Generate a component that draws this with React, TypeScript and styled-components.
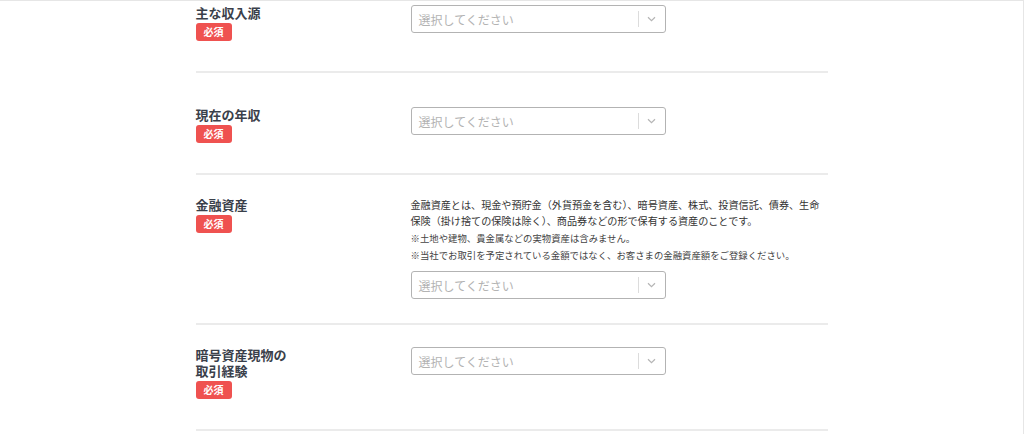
import React from "react";
import styled, { createGlobalStyle } from "styled-components";

const GlobalStyle = createGlobalStyle`
  html, body {
    margin: 0;
    padding: 0;
    background: #fff;
    height: 434px;
    overflow: hidden;
  }
  body {
    font-family: "Noto Sans CJK JP", "Noto Sans", sans-serif;
  }
`;

type Field = {
  label: string;
  note?: boolean;
  top: number;
};

const fields: Field[] = [
  { label: "主な収入源", top: 4 },
  { label: "現在の年収", top: 34 },
  { label: "金融資産", note: true, top: 22 },
  { label: "暗号資産現物の取引経験", top: 22 },
];

const App = () => {
  return (
    <>
      <GlobalStyle />
      <Frame>
        <Form>
          {fields.map((f) => (
            <Row key={f.label} $top={f.top}>
              <LabelCell>
                <Label>{f.label}</Label>
                <Required>必須</Required>
              </LabelCell>
              <InputCell>
                {f.note && (
                  <Help>
                    <Lead>
                      金融資産とは、現金や預貯金（外貨預金を含む）、暗号資産、株式、投資信託、債券、生命保険（掛け捨ての保険は除く）、商品券などの形で保有する資産のことです。
                    </Lead>
                    <Note>※土地や建物、貴金属などの実物資産は含みません。</Note>
                    <Note>
                      ※当社でお取引を予定されている金額ではなく、お客さまの金融資産額をご登録ください。
                    </Note>
                  </Help>
                )}
                <Select>
                  <Placeholder>選択してください</Placeholder>
                  <Indicator>
                    <Sep />
                    <svg width="9" height="6" viewBox="0 0 9 6">
                      <path
                        d="M1 1.2 L4.5 4.6 L8 1.2"
                        fill="none"
                        stroke="#b5b5b5"
                        strokeWidth="1.2"
                      />
                    </svg>
                  </Indicator>
                </Select>
              </InputCell>
            </Row>
          ))}
        </Form>
      </Frame>
    </>
  );
};

export default App;

const Frame = styled.div`
  height: 434px;
  box-sizing: border-box;
  border-top: 1px solid #e6e6e6;
  border-right: 1px solid #e6e6e6;
`;

const Form = styled.div`
  width: 632px;
  margin: 0 auto;
`;

const Row = styled.div<{ $top: number }>`
  display: grid;
  grid-template-columns: 215px 1fr;
  align-items: start;
  padding: ${(p) => p.$top}px 0 24px;
  border-bottom: 2px solid #ebebeb;
`;

const LabelCell = styled.div`
  display: flex;
  flex-direction: column;
  align-items: flex-start;
  padding-bottom: 6px;
`;

const Label = styled.div`
  max-width: 100px;
  font-size: 13px;
  line-height: 16px;
  font-weight: 700;
  color: #3a404a;
`;

const Required = styled.span`
  margin-top: 2px;
  width: 36px;
  height: 18px;
  border-radius: 3px;
  background: #ef5250;
  color: #fff;
  font-size: 10px;
  font-weight: 700;
  line-height: 18px;
  text-align: center;
`;

const InputCell = styled.div`
  display: flex;
  flex-direction: column;
`;

const Help = styled.div`
  margin-bottom: 8px;
`;

const Lead = styled.p`
  margin: 0;
  font-size: 10.1px;
  line-height: 16px;
  color: #333;
`;

const Note = styled.p`
  margin: 1px 0 0;
  font-size: 9.4px;
  line-height: 16px;
  color: #444;
`;

const Select = styled.div`
  box-sizing: border-box;
  width: 255px;
  height: 28px;
  display: flex;
  align-items: center;
  border: 1px solid #b3b3b3;
  border-radius: 3px;
  background: #fff;
`;

const Placeholder = styled.span`
  flex: 1;
  padding-left: 7px;
  font-size: 12px;
  color: #b3b3b3;
`;

const Indicator = styled.div`
  display: flex;
  align-items: center;
  gap: 8px;
  padding-right: 9px;
`;

const Sep = styled.span`
  width: 1px;
  height: 16px;
  background: #dcdcdc;
`;
